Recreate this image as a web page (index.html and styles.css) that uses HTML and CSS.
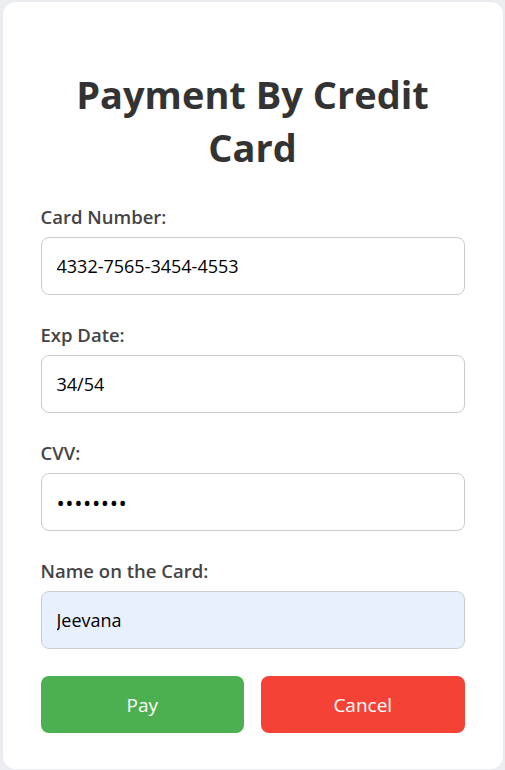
FILE: index.html
```html
<!DOCTYPE html>
<html lang="en">
<head>
<meta charset="utf-8">
<title>Payment By Credit Card</title>
<link rel="stylesheet" href="styles.css">
</head>
<body>
  <div class="card">
    <h1 class="title">Payment By Credit Card</h1>
    <form class="form">
      <div class="group">
        <label class="label" for="num">Card Number:</label>
        <input class="input" id="num" type="text" value="4332-7565-3454-4553">
      </div>
      <div class="group">
        <label class="label" for="exp">Exp Date:</label>
        <input class="input" id="exp" type="text" value="34/54">
      </div>
      <div class="group">
        <label class="label" for="cvv">CVV:</label>
        <input class="input input-secret" id="cvv" type="password" value="12345678">
      </div>
      <div class="group">
        <label class="label" for="name">Name on the Card:</label>
        <input class="input input-filled" id="name" type="text" value="Jeevana">
      </div>
      <div class="actions">
        <button class="btn btn-pay" type="button">Pay</button>
        <button class="btn btn-cancel" type="button">Cancel</button>
      </div>
    </form>
  </div>
</body>
</html>
```
FILE: styles.css
```css
* { box-sizing: border-box; }

html, body {
  margin: 0;
  padding: 0;
  background: #eceef2;
  font-family: "Open Sans", "Noto Sans", sans-serif;
}

body {
  display: flex;
  justify-content: center;
  padding-top: 2px;
}

.card {
  width: 500px;
  background: #ffffff;
  border-radius: 12px;
  padding: 0 38px 36px;
  box-shadow: 0 0 4px rgba(0, 0, 0, 0.04);
}

.title {
  margin: 66px 0 31px;
  font-size: 38px;
  line-height: 53px;
  font-weight: 700;
  color: #333333;
  text-align: center;
}

.form {
  display: flex;
  flex-direction: column;
  gap: 28px;
}

.group {
  display: flex;
  flex-direction: column;
  gap: 8px;
}

.label {
  font-size: 18.5px;
  line-height: 24px;
  font-weight: 600;
  color: #444444;
}

.input {
  width: 100%;
  height: 58px;
  padding: 0 15px;
  border: 1px solid #cccccc;
  border-radius: 8px;
  font-family: inherit;
  font-size: 18px;
  color: #000000;
  background: #ffffff;
  outline: none;
}

.input-secret {
  font-size: 22px;
  letter-spacing: 0.6px;
}

.input-filled {
  background: #e8f0fe;
}

.actions {
  display: flex;
  gap: 17px;
  margin-top: -1px;
}

.btn {
  flex: 1;
  height: 57px;
  border: none;
  border-radius: 8px;
  font-family: inherit;
  font-size: 19px;
  color: #ffffff;
  cursor: pointer;
}

.btn-pay { background: #4caf50; }
.btn-cancel { background: #f44336; }
```
